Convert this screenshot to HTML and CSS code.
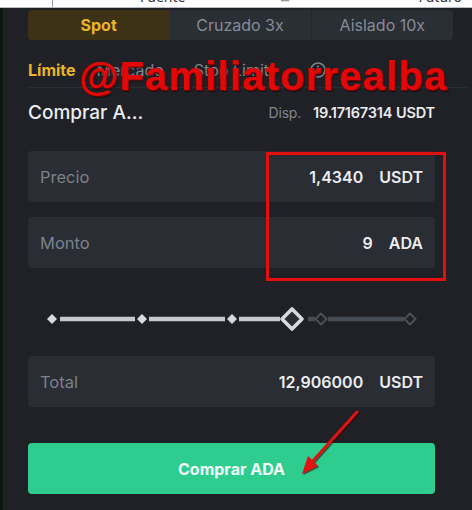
FILE: index.html
```html
<!DOCTYPE html>
<html lang="es">
<head>
<meta charset="utf-8">
<title>Comprar ADA</title>
<link rel="stylesheet" href="styles.css">
</head>
<body>
<div class="topbar">
  <span class="tb-line"></span>
  <span class="tb-text tb-fuente">Fuente</span>
  <span class="tb-text tb-icon">⊞</span>
  <span class="tb-text tb-futuro">Futuro</span>
</div>
<div class="app">
  <div class="strip"></div>
  <div class="panel">
    <div class="tabs">
      <div class="tab tab-active">Spot</div>
      <div class="tab">Cruzado 3x</div>
      <div class="tab tab-sep">Aislado 10x</div>
    </div>
    <div class="types">
      <span class="type type-active">Límite</span>
      <span class="type">Mercado</span>
      <span class="type type-last">Stop Limit</span>
      <svg class="info" width="18" height="18" viewBox="0 0 18 18"><circle cx="9" cy="9" r="7" fill="none" stroke="#80858e" stroke-width="1.6"/><path d="M9 8v4.5" stroke="#80858e" stroke-width="1.6" stroke-linecap="round"/><circle cx="9" cy="5.6" r="1" fill="#80858e"/></svg>
    </div>
    <div class="heading">
      <span class="title">Comprar A...</span>
      <span class="avail"><span class="disp">Disp.</span><b>19.17167314</b> <b>USDT</b></span>
    </div>
    <div class="field field-first">
      <span class="label">Precio</span>
      <span class="value"><b>1,4340</b><b class="unit">USDT</b></span>
    </div>
    <div class="field field-gap">
      <span class="label">Monto</span>
      <span class="value"><b>9</b><b class="unit">ADA</b></span>
    </div>
    <svg class="slider" width="407" height="30" viewBox="0 0 407 30">
      <g stroke-width="4.5" stroke-linecap="butt">
        <line x1="32" y1="15" x2="107" y2="15" stroke="#c6c9ce"/>
        <line x1="121" y1="15" x2="197" y2="15" stroke="#c6c9ce"/>
        <line x1="211" y1="15" x2="252" y2="15" stroke="#c6c9ce"/>
        <line x1="280" y1="15" x2="287" y2="15" stroke="#474c55"/>
        <line x1="300" y1="15" x2="376" y2="15" stroke="#474c55"/>
      </g>
      <polygon points="24,10 29,15 24,20 19,15" fill="#d7dadf"/>
      <polygon points="114,10 119,15 114,20 109,15" fill="#d7dadf"/>
      <polygon points="204,10 209,15 204,20 199,15" fill="#d7dadf"/>
      <polygon points="264,5 274,15 264,25 254,15" fill="#2a2e35" stroke="#d7dadf" stroke-width="3.6" stroke-linejoin="round"/>
      <polygon points="293,9.5 298.5,15 293,20.5 287.5,15" fill="#1f2127" stroke="#4a4f58" stroke-width="2" stroke-linejoin="round"/>
      <polygon points="382,9.5 387.5,15 382,20.5 376.5,15" fill="#1f2127" stroke="#4a4f58" stroke-width="2" stroke-linejoin="round"/>
    </svg>
    <div class="field field-total">
      <span class="label">Total</span>
      <span class="value"><b>12,906000</b><b class="unit">USDT</b></span>
    </div>
    <button class="buy">Comprar ADA</button>
  </div>
</div>

<div class="watermark">@Familiatorrealba</div>
<div class="highlight"></div>
<svg class="arrow" width="472" height="510" viewBox="0 0 472 510">
  <g transform="translate(1.2,1.2)" opacity="0.55">
    <line x1="357" y1="412" x2="311" y2="463" stroke="#3a0000" stroke-width="3.4" stroke-linecap="round"/>
    <polygon points="302,474 308,456 318,466" fill="#3a0000"/>
  </g>
  <line x1="357" y1="412" x2="311" y2="463" stroke="#e21212" stroke-width="3" stroke-linecap="round"/>
  <polygon points="302,474 308,456 318,466" fill="#e21212"/>
</svg>
</body>
</html>
```
FILE: styles.css
```css
* { box-sizing: border-box; }
html, body { margin: 0; padding: 0; }
body {
  width: 472px;
  height: 510px;
  overflow: hidden;
  background: #1f2127;
  font-family: "Inter", "Noto Sans", sans-serif;
  position: relative;
}
.topbar {
  height: 8px;
  background: #ffffff;
  border-bottom: 1px solid #b9bcc2;
  display: flex;
  align-items: flex-start;
  overflow: hidden;
  font-family: "Noto Sans", sans-serif;
  font-size: 14px;
  color: #333;
}
.tb-line {
  width: 1px;
  height: 7px;
  background: #9aa0a8;
  margin-left: 52px;
  flex-shrink: 0;
}
.tb-text { line-height: 14px; margin-top: -10px; }
.tb-fuente { margin-left: 87px; }
.tb-icon { margin-left: 95px; color: #888; font-size: 12px; }
.tb-futuro { margin-left: 128px; }

.app {
  display: flex;
  height: 502px;
}
.strip {
  width: 4px;
  flex-shrink: 0;
  background: #0d1512;
  border-right: 1px solid #1d2a24;
}
.panel {
  flex: 1;
  min-width: 0;
  padding-left: 24px;
  display: flex;
  flex-direction: column;
  align-items: flex-start;
}
.tabs {
  margin-top: 2px;
  width: 425px;
  height: 30px;
  display: flex;
  background: #2a2e35;
  border-radius: 4px;
  overflow: hidden;
}
.tab {
  flex: 1;
  display: flex;
  align-items: center;
  justify-content: center;
  font-size: 16px;
  color: #878c95;
}
.tab-active {
  background: #3d3116;
  color: #e8b52b;
  font-weight: 700;
}
.tab-sep { border-left: 1px solid #24272d; }

.types {
  margin-top: 18px;
  width: 440px;
  height: 30px;
  padding-bottom: 6px;
  display: flex;
  align-items: center;
  border-bottom: 1px solid #2a2d33;
  font-size: 16px;
  line-height: 24px;
}
.type { color: #80858e; margin-right: 30px; }
.type-active { color: #e8b52b; font-weight: 700; margin-right: 21px; }
.type-last { margin-right: 40px; }

.heading {
  margin-top: 14px;
  width: 407px;
  height: 20px;
  display: flex;
  align-items: center;
  justify-content: space-between;
}
.title {
  color: #eaecef;
  font-size: 19px;
  font-weight: 500;
}
.avail {
  font-size: 14.5px;
  color: #eaecef;
  letter-spacing: -0.2px;
}
.avail b { font-weight: 600; }
.disp { color: #80858e; margin-right: 12px; font-size: 14px; }

.field {
  width: 407px;
  height: 51px;
  background: #2a2d34;
  border-radius: 4px;
  display: flex;
  align-items: center;
  justify-content: space-between;
  padding: 0 12px;
}
.field-first { margin-top: 29px; }
.field-gap { margin-top: 15px; }
.field-total { margin-top: 22px; }
.label {
  color: #7c818a;
  font-size: 16.5px;
}
.value {
  color: #eaecef;
  font-size: 16px;
  display: flex;
  gap: 16px;
}
.value b { font-weight: 600; }

.slider { margin-top: 36px; display: block; flex-shrink: 0; }

.buy {
  margin-top: 36px;
  width: 407px;
  height: 51px;
  flex-shrink: 0;
  border: 0;
  border-radius: 4px;
  background: #2ecd8f;
  color: #f4fff9;
  font-family: "Inter", "Noto Sans", sans-serif;
  font-size: 16px;
  font-weight: 700;
}

.watermark {
  position: absolute;
  left: 79px;
  top: 56px;
  font-family: "Liberation Sans", Arial, sans-serif;
  font-weight: 700;
  font-size: 40px;
  line-height: 40px;
  letter-spacing: 1.2px;
  color: #e30808;
  text-shadow: 1px 1px 0 #7d0000, 2px 2px 1px rgba(0,0,0,0.45);
  white-space: nowrap;
}
.highlight {
  position: absolute;
  left: 266px;
  top: 152px;
  width: 180px;
  height: 129px;
  border: 3.5px solid #e31010;
  box-shadow: 0 0 1px #600, inset 0 0 1px #600;
}
.arrow {
  position: absolute;
  left: 0;
  top: 0;
  pointer-events: none;
}
```
